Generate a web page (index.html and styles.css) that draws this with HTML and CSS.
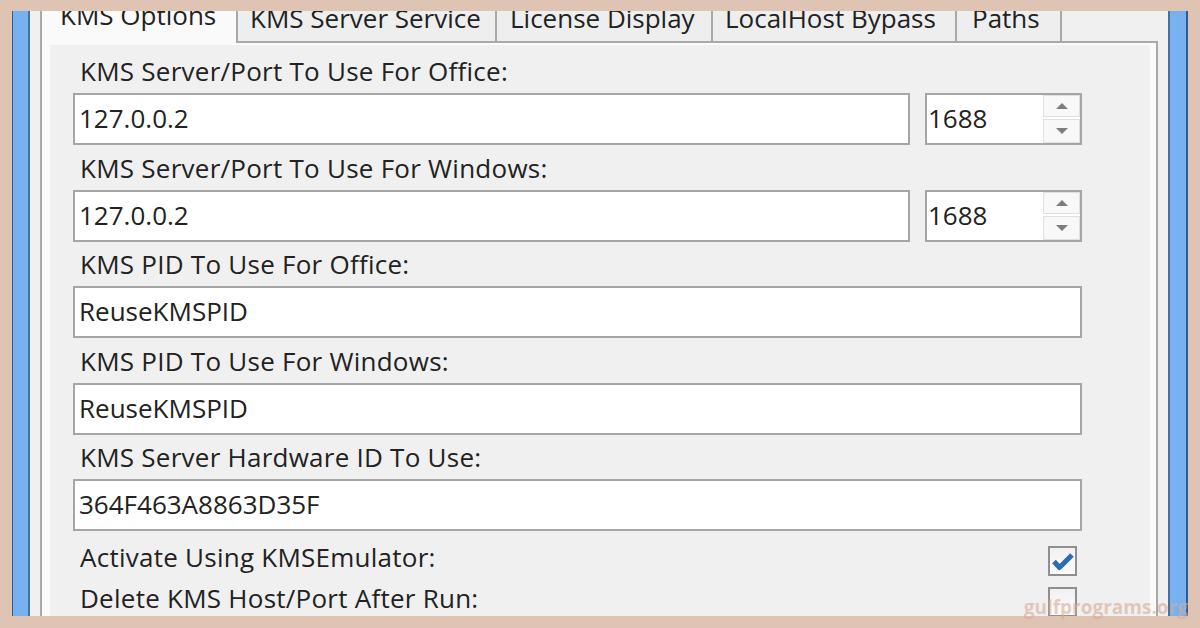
FILE: index.html
```html
<!DOCTYPE html>
<html lang="en">
<head>
    <meta charset="UTF-8">
    <title>KMS Options</title>
    <link rel="stylesheet" href="styles.css">
</head>
<body>
    <div class="screen">
        <div class="window">
            <div class="frame frame_left"></div>
            <div class="client">
                <div class="tabs">
                    <div class="tab tab_active tab_options">KMS Options</div>
                    <div class="tab tab_server">KMS Server Service</div>
                    <div class="tab tab_license">License Display</div>
                    <div class="tab tab_bypass">LocalHost Bypass</div>
                    <div class="tab tab_paths">Paths</div>
                    <div class="tab_fill"></div>
                </div>
                <div class="panel">
                    <div class="page">
                        <div class="fields">
                            <div class="field">
                                <div class="field_label">KMS Server/Port To Use For Office:</div>
                                <div class="field_row">
                                    <div class="textbox">127.0.0.2</div>
                                    <div class="spinbox">
                                        <span class="spin_value">1688</span>
                                        <span class="spin_buttons">
                                            <span class="spin_btn spin_up"></span>
                                            <span class="spin_btn spin_down"></span>
                                        </span>
                                    </div>
                                </div>
                            </div>
                            <div class="field">
                                <div class="field_label">KMS Server/Port To Use For Windows:</div>
                                <div class="field_row">
                                    <div class="textbox">127.0.0.2</div>
                                    <div class="spinbox">
                                        <span class="spin_value">1688</span>
                                        <span class="spin_buttons">
                                            <span class="spin_btn spin_up"></span>
                                            <span class="spin_btn spin_down"></span>
                                        </span>
                                    </div>
                                </div>
                            </div>
                            <div class="field">
                                <div class="field_label">KMS PID To Use For Office:</div>
                                <div class="textbox">ReuseKMSPID</div>
                            </div>
                            <div class="field">
                                <div class="field_label">KMS PID To Use For Windows:</div>
                                <div class="textbox">ReuseKMSPID</div>
                            </div>
                            <div class="field">
                                <div class="field_label">KMS Server Hardware ID To Use:</div>
                                <div class="textbox">364F463A8863D35F</div>
                            </div>
                        </div>

                        <div class="checks">
                            <div class="check_row">
                                <span class="check_label">Activate Using KMSEmulator:</span>
                                <span class="checkbox">
                                    <svg width="25" height="26" viewBox="0 0 25 26">
                                        <path d="M4 13.5 L9.5 19.5 L22 7" fill="none" stroke="#2d6cb4" stroke-width="5" stroke-linejoin="round"/>
                                    </svg>
                                </span>
                            </div>
                            <div class="check_row">
                                <span class="check_label">Delete KMS Host/Port After Run:</span>
                                <span class="checkbox"></span>
                            </div>
                        </div>
                    </div>
                </div>
            </div>
            <div class="frame frame_right"></div>
        </div>
        <div class="watermark">gulfprograms.org</div>
    </div>
</body>
</html>
```

FILE: styles.css
```css
*{
    margin: 0;
    padding: 0;
    box-sizing: border-box;
}
body{
    background: #e0c4b3;
    font-family: "Open Sans", "Noto Sans", sans-serif;
    color: #222;
}
.screen{
    width: 1200px;
    height: 628px;
    padding: 11px 12px 12px 12px;
    position: relative;
    overflow: hidden;
}
.window{
    display: flex;
    height: 605px;
    overflow: hidden;
}
.frame{
    background: #78b1f0;
}
.frame_left{
    width: 18px;
    border-left: 1px solid #2f5d92;
    border-right: 2px solid #46719f;
}
.frame_right{
    width: 20px;
    border-left: 2px solid #46719f;
    border-right: 2px solid #2f5d92;
}
.client{
    flex: 1;
    background: #f0f0f0;
    padding: 0 10px;
    font-size: 26px;
}

/* tabs */
.tabs{
    display: flex;
    align-items: flex-end;
    height: 32px;
}
.tab{
    line-height: 30px;
    padding: 0 0 8px 12px;
    border-right: 2px solid #a9a9a9;
    border-bottom: 2px solid #a9a9a9;
    background: #eeeeee;
    white-space: nowrap;
    overflow: hidden;
}
.tab_active{
    background: #fafafa;
    border-left: 2px solid #a9a9a9;
    border-bottom: none;
    padding-bottom: 13px;
    padding-left: 18px;
}
.tab_options{ width: 198px; }
.tab_server{ width: 259px; }
.tab_license{ width: 216px; padding-left: 13px; }
.tab_bypass{ width: 244px; }
.tab_paths{ width: 105px; padding-left: 15px; }
.tab_fill{
    flex: 1;
    border-bottom: 2px solid #a9a9a9;
}
.panel{
    border: 2px solid #a9a9a9;
    border-top: none;
    background: #fafafa;
    padding: 2px 6px 8px 8px;
}
.page{
    background: #f0f0f0;
    padding: 11px 68px 30px 23px;
}

/* fields */
.fields{
    display: flex;
    flex-direction: column;
    gap: 7.5px;
}
.field_label{
    line-height: 30px;
    padding-left: 7px;
    margin-bottom: 7px;
    letter-spacing: 0.25px;
    white-space: nowrap;
}
.field_row{
    display: flex;
    gap: 15px;
}
.textbox{
    flex: 1;
    height: 52px;
    border: 2px solid #a5a5a5;
    background: #fff;
    line-height: 46px;
    padding-left: 4px;
}
.spinbox{
    width: 157px;
    height: 52px;
    border: 2px solid #a5a5a5;
    background: #fff;
    display: flex;
}
.spin_value{
    flex: 1;
    line-height: 46px;
    padding-left: 1px;
}
.spin_buttons{
    width: 37px;
    display: flex;
    flex-direction: column;
    gap: 2px;
}
.spin_btn{
    border: 1px solid #e0e0e0;
    background: #f8f8f8;
    display: flex;
    align-items: center;
    justify-content: center;
}
.spin_up{ height: 22px; }
.spin_down{ flex: 1; }
.spin_up::after{
    content: "";
    border-left: 6px solid transparent;
    border-right: 6px solid transparent;
    border-bottom: 6px solid #7d7d7d;
}
.spin_down::after{
    content: "";
    border-left: 6px solid transparent;
    border-right: 6px solid transparent;
    border-top: 6px solid #7d7d7d;
}

/* checkboxes */
.checks{
    margin-top: 11px;
}
.check_row{
    display: flex;
    align-items: flex-start;
    height: 41px;
    padding-left: 7px;
}
.check_label{
    flex: 1;
    line-height: 30px;
    letter-spacing: 0.25px;
}
.checkbox{
    width: 29px;
    height: 30px;
    margin-top: 4px;
    margin-right: 5px;
    border: 2px solid #8f8f8f;
    background: linear-gradient(#f1f1f1, #fcfcfc);
    display: flex;
    align-items: center;
    justify-content: center;
}

.watermark{
    position: absolute;
    right: 12px;
    bottom: 9px;
    font-family: "Open Sans", sans-serif;
    font-weight: 700;
    font-size: 19px;
    line-height: 24px;
    color: rgba(214, 170, 150, 0.6);
}
```
